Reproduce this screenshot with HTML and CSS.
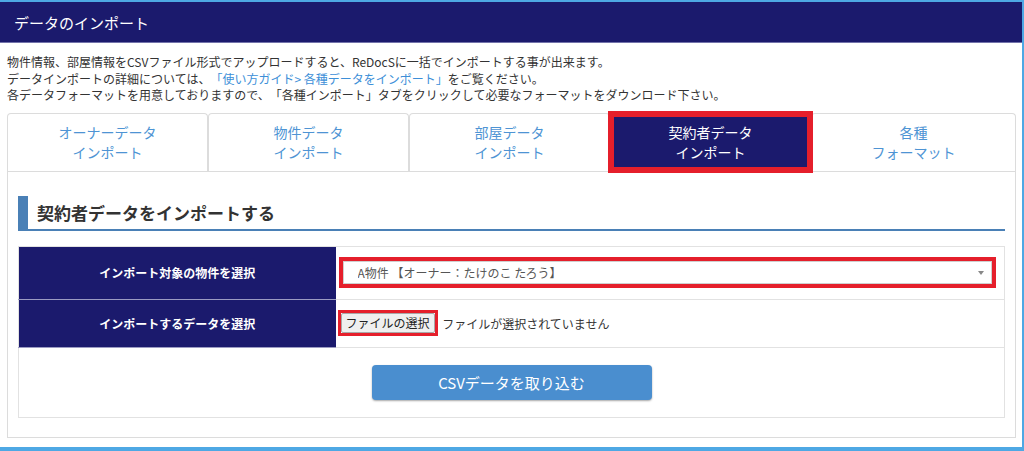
FILE: index.html
```html
<!DOCTYPE html>
<html lang="ja">

<head>
    <meta charset="UTF-8" />
    <meta name="viewport" content="width=device-width, initial-scale=1" />
    <title>データのインポート</title>
    <link rel="stylesheet" href="styles.css">
</head>

<body>
    <div class="frame">
        <header class="box-head">
            <h2>データのインポート</h2>
        </header>

        <div class="box-body">
            <p class="intro">
                物件情報、部屋情報をCSVファイル形式でアップロードすると、ReDocSに一括でインポートする事が出来ます。<br>
                データインポートの詳細については、<a href="#">「使い方ガイド&gt; 各種データをインポート」</a>をご覧ください。<br>
                各データフォーマットを用意しておりますので、「各種インポート」タブをクリックして必要なフォーマットをダウンロード下さい。
            </p>

            <ul class="tabs">
                <li><a href="#">オーナーデータ<br>インポート</a></li>
                <li><a href="#">物件データ<br>インポート</a></li>
                <li><a href="#">部屋データ<br>インポート</a></li>
                <li class="active"><a href="#">契約者データ<br>インポート</a></li>
                <li><a href="#">各種<br>フォーマット</a></li>
            </ul>

            <section class="tab-panel">
                <h3 class="section-title">契約者データをインポートする</h3>

                <table class="import-table">
                    <tr>
                        <th>インポート対象の物件を選択</th>
                        <td class="row-select">
                            <div class="highlight">
                                <div class="select-wrap">
                                    <select>
                                        <option>A物件 【オーナー：たけのこ たろう】</option>
                                    </select>
                                </div>
                            </div>
                        </td>
                    </tr>
                    <tr>
                        <th>インポートするデータを選択</th>
                        <td class="row-file">
                            <span class="highlight thin"><button class="file-btn" type="button">ファイルの選択</button></span>
                            <span class="file-name">ファイルが選択されていません</span>
                        </td>
                    </tr>
                    <tr>
                        <td class="row-submit" colspan="2">
                            <button class="submit-btn" type="button">CSVデータを取り込む</button>
                        </td>
                    </tr>
                </table>
            </section>
        </div>
    </div>
</body>

</html>
```

FILE: styles.css
```css
* {
    margin: 0;
    padding: 0;
    box-sizing: border-box;
    font-family: "Noto Sans CJK JP", "Noto Sans", sans-serif;
    text-spacing-trim: space-all;
}

body {
    background-color: #fff;
    color: #333;
}

.frame {
    width: 1024px;
    height: 451px;
    border-top: 2px solid #4ea8e4;
    border-right: 2px solid #4ea8e4;
    border-bottom: 4px solid #4ea8e4;
    overflow: hidden;
}

.box-head {
    background-color: #1b1a6d;
    height: 41px;
    border-bottom: 1px solid #7373ab;
    padding-left: 14px;
}

.box-head h2 {
    color: #fff;
    font-size: 15px;
    font-weight: normal;
    line-height: 41px;
}

.box-body {
    padding: 11px 6px 0 7px;
}

.intro {
    font-size: 12px;
    line-height: 16.5px;
    color: #333;
    margin-bottom: 9px;
    white-space: nowrap;
}

.intro a {
    color: #3d8fd8;
    text-decoration: none;
}

.tabs {
    list-style: none;
    display: grid;
    grid-template-columns: repeat(4, 201px) 1fr;
}

.tabs li {
    border: 1px solid #dcdcdc;
    border-bottom: none;
    border-radius: 4px 4px 0 0;
    height: 58px;
    padding: 8px 0 9px;
    text-align: center;
}

.tabs li a {
    display: block;
    color: #4e94d4;
    font-size: 14px;
    line-height: 20px;
    text-decoration: none;
}

.tabs li.active {
    background-color: #1b1a6d;
    border-color: #1b1a6d;
    border-radius: 0;
    outline: 6px solid #e51f2b;
    outline-offset: -4px;
    position: relative;
    z-index: 1;
}

.tabs li.active a {
    color: #fff;
}

.tab-panel {
    border: 1px solid #dcdcdc;
    padding: 24px 10px 19px 10px;
}

.section-title {
    font-size: 17px;
    font-weight: bold;
    color: #333;
    height: 35px;
    line-height: 33px;
    border-left: 10px solid #4a80b6;
    border-bottom: 2px solid #4a80b6;
    padding-left: 9px;
    margin-bottom: 15px;
}

.import-table {
    width: 100%;
    border-collapse: collapse;
    border: 1px solid #e2e2e2;
}

.import-table th {
    width: 317px;
    background-color: #1b1a6d;
    color: #fff;
    font-size: 12px;
    font-weight: bold;
    text-align: center;
    border-bottom: 1px solid #9b9bc2;
}

.import-table td {
    border-bottom: 1px solid #e2e2e2;
    font-size: 12px;
}

.row-select {
    height: 53px;
    padding: 0 8px 0 3px;
}

.row-file {
    height: 48px;
    padding: 0 2px;
}

.row-submit {
    height: 70px;
    text-align: center;
}

.highlight {
    border: 4px solid #e51f2b;
}

.highlight.thin {
    display: inline-block;
    border-width: 3px;
    vertical-align: middle;
}

.select-wrap {
    position: relative;
    border: 1px solid #cfcfcf;
    height: 23px;
}

.select-wrap select {
    appearance: none;
    -webkit-appearance: none;
    border: none;
    outline: none;
    background: #fff;
    width: 100%;
    height: 21px;
    font-size: 12px;
    color: #555;
    padding-left: 14px;
}

.select-wrap::after {
    content: "";
    position: absolute;
    right: 7px;
    top: 9px;
    border-left: 3px solid transparent;
    border-right: 3px solid transparent;
    border-top: 4px solid #888;
}

.file-btn {
    display: block;
    font-size: 12px;
    line-height: 18px;
    color: #222;
    background-color: #efefef;
    border: 1px solid #a8a8a8;
    border-radius: 2px;
    padding: 0 4px;
}

.file-name {
    vertical-align: middle;
    margin-left: 2px;
    color: #333;
}

.submit-btn {
    width: 280px;
    height: 35px;
    background-color: #4a8ecf;
    color: #fff;
    font-size: 15px;
    border: none;
    border-radius: 4px;
    box-shadow: 0 1px 2px rgba(0, 0, 0, 0.35);
    cursor: pointer;
}
```
